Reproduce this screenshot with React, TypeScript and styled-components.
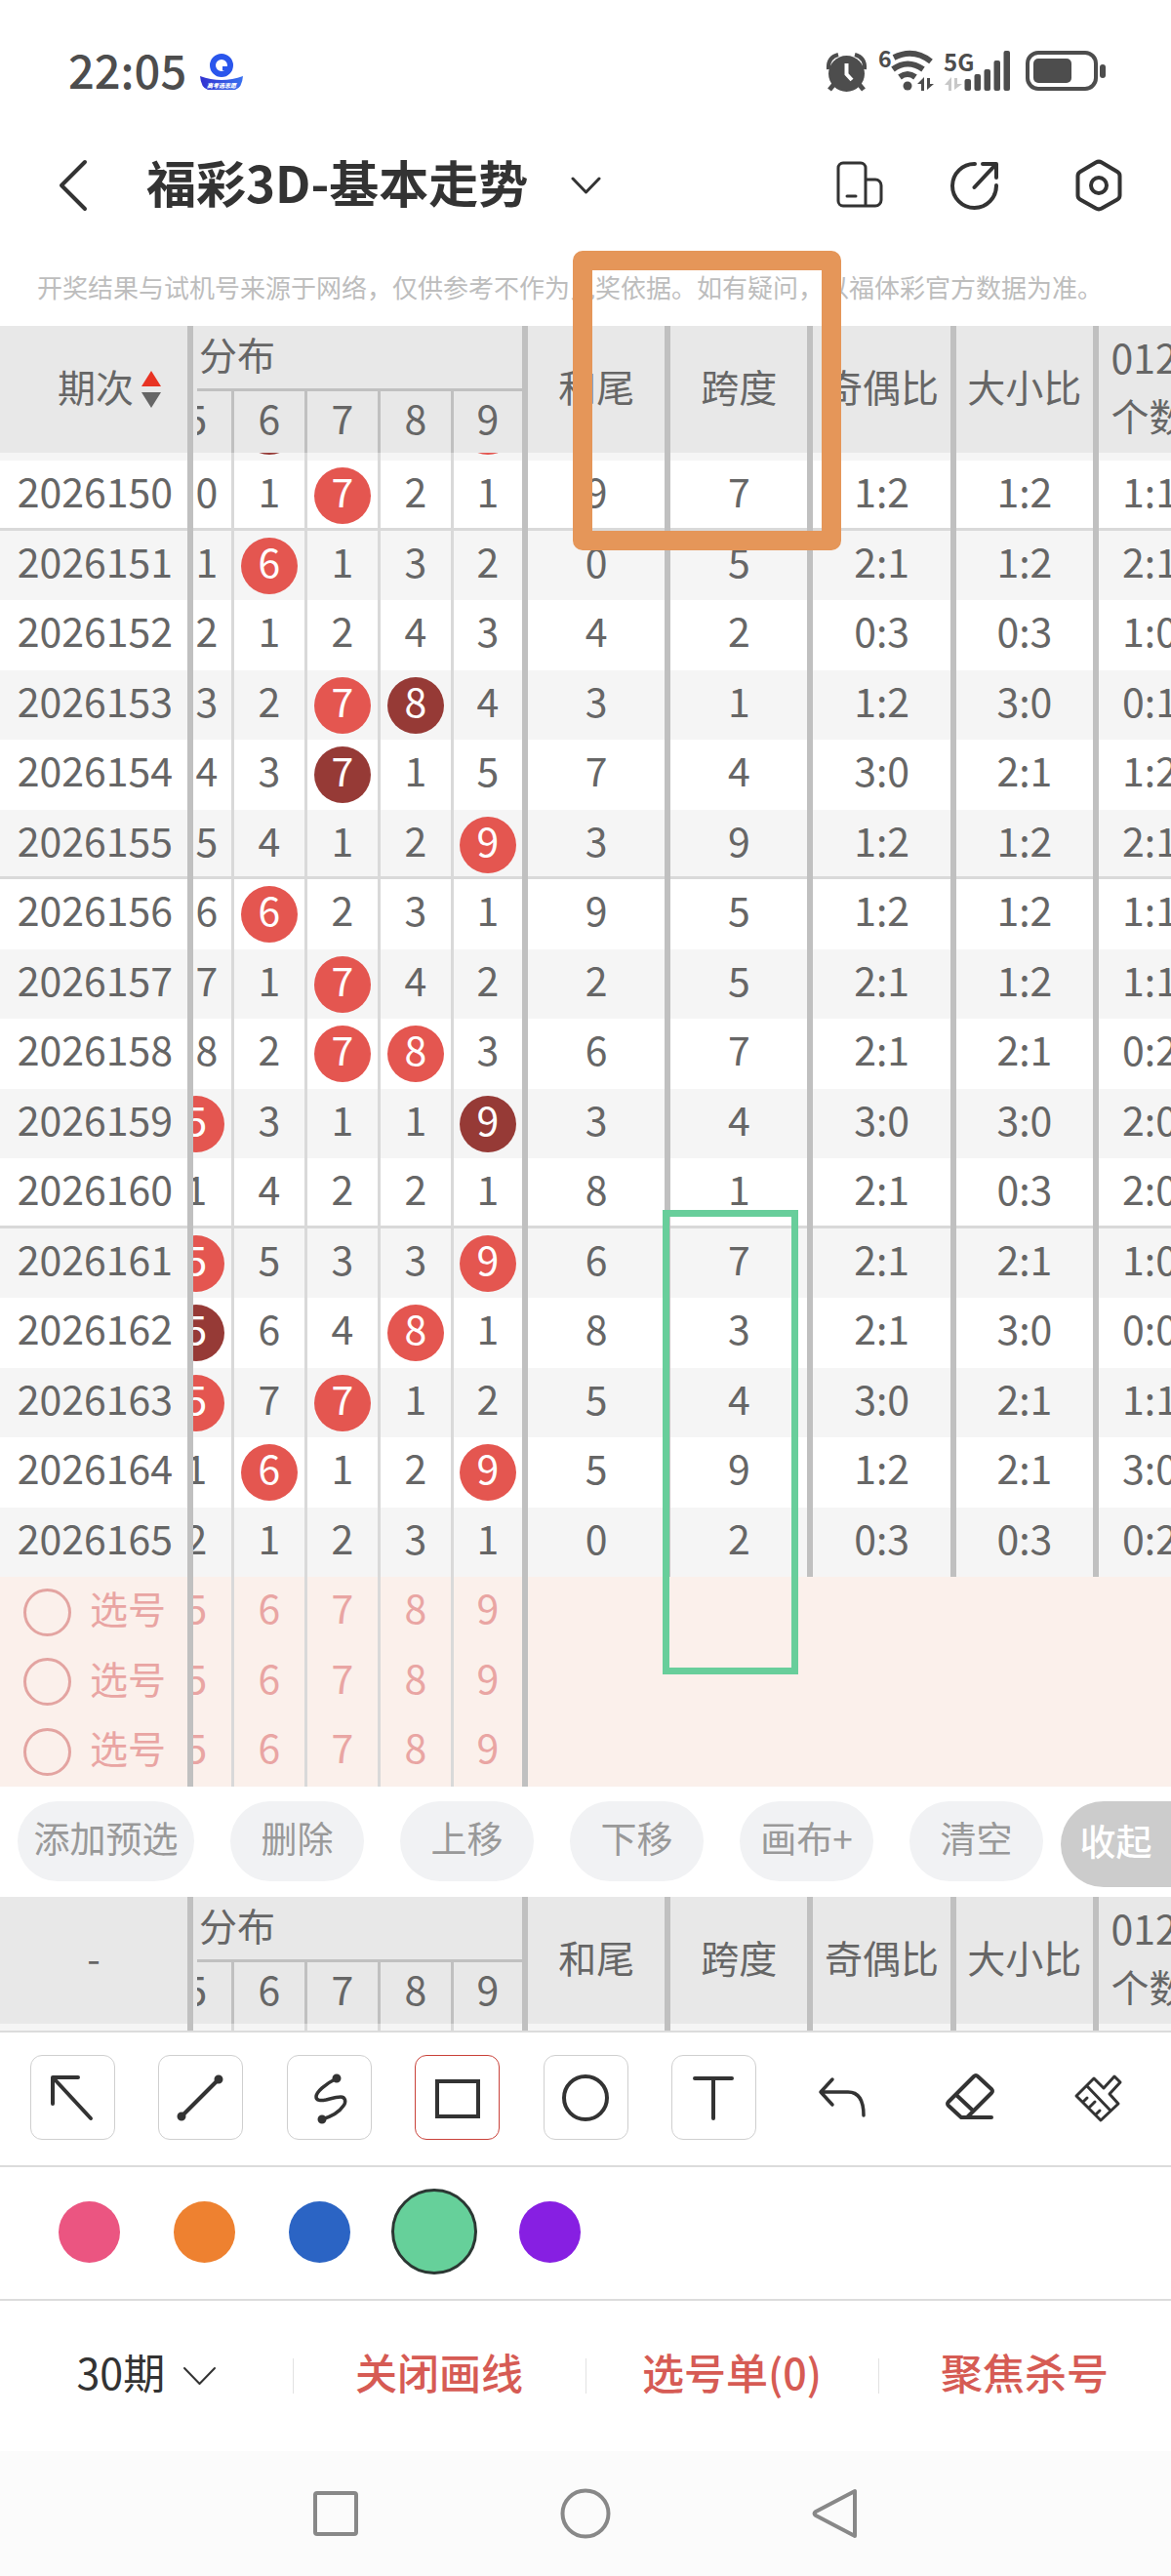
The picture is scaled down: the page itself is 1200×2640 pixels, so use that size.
import React from "react";
import styled, { createGlobalStyle, css } from "styled-components";

const GlobalStyle = createGlobalStyle`
  *, *::before, *::after { box-sizing: border-box; }
  body {
    margin: 0;
    background: #fff;
    color: #666;
    font-family: "Noto Sans CJK SC", "Noto Sans", sans-serif;
    overflow-x: hidden;
  }
  button, input, select { font: inherit; color: inherit; margin: 0; }
  button { padding: 0; border: 0; background: none; cursor: pointer; }
  h1, p { margin: 0; }
`;

/* ---------- data ---------- */

type Cell = string;
interface Draw {
  issue: string;
  dist: Cell[];
  stats: string[];
}

/* "*" marks a drawn number, "#" a number drawn twice */
const draws: Draw[] = [
  { issue: "2026150", dist: ["0", "1", "*7", "2", "1"], stats: ["9", "7", "1:2", "1:2", "1:1"] },
  { issue: "2026151", dist: ["1", "*6", "1", "3", "2"], stats: ["0", "5", "2:1", "1:2", "2:1"] },
  { issue: "2026152", dist: ["2", "1", "2", "4", "3"], stats: ["4", "2", "0:3", "0:3", "1:0"] },
  { issue: "2026153", dist: ["3", "2", "*7", "#8", "4"], stats: ["3", "1", "1:2", "3:0", "0:1"] },
  { issue: "2026154", dist: ["4", "3", "#7", "1", "5"], stats: ["7", "4", "3:0", "2:1", "1:2"] },
  { issue: "2026155", dist: ["5", "4", "1", "2", "*9"], stats: ["3", "9", "1:2", "1:2", "2:1"] },
  { issue: "2026156", dist: ["6", "*6", "2", "3", "1"], stats: ["9", "5", "1:2", "1:2", "1:1"] },
  { issue: "2026157", dist: ["7", "1", "*7", "4", "2"], stats: ["2", "5", "2:1", "1:2", "1:1"] },
  { issue: "2026158", dist: ["8", "2", "*7", "*8", "3"], stats: ["6", "7", "2:1", "2:1", "0:2"] },
  { issue: "2026159", dist: ["*5", "3", "1", "1", "#9"], stats: ["3", "4", "3:0", "3:0", "2:0"] },
  { issue: "2026160", dist: ["1", "4", "2", "2", "1"], stats: ["8", "1", "2:1", "0:3", "2:0"] },
  { issue: "2026161", dist: ["*5", "5", "3", "3", "*9"], stats: ["6", "7", "2:1", "2:1", "1:0"] },
  { issue: "2026162", dist: ["#5", "6", "4", "*8", "1"], stats: ["8", "3", "2:1", "3:0", "0:0"] },
  { issue: "2026163", dist: ["*5", "7", "*7", "1", "2"], stats: ["5", "4", "3:0", "2:1", "1:1"] },
  { issue: "2026164", dist: ["1", "*6", "1", "2", "*9"], stats: ["5", "9", "1:2", "2:1", "3:0"] },
  { issue: "2026165", dist: ["2", "1", "2", "3", "1"], stats: ["0", "2", "0:3", "0:3", "0:2"] },
];

const digits = ["5", "6", "7", "8", "9"];
const editActions = ["添加预选", "删除", "上移", "下移", "画布+", "清空"];
const swatches = [
  { name: "粉色", color: "#eb5581" },
  { name: "橙色", color: "#ee8130" },
  { name: "蓝色", color: "#2b64c4" },
  { name: "绿色", color: "#66d09a" },
  { name: "紫色", color: "#871fe2" },
];

/* ---------- layout ---------- */

const Screen = styled.div`
  display: flex;
  flex-direction: column;
  overflow: hidden;
  background: #fff;
`;

const StatusBar = styled.div`
  display: flex;
  align-items: center;
  justify-content: space-between;
  height: 148px;
  padding: 0 66px 0 70px;
  color: #4d4d4d;
`;

const StatusGroup = styled.div<{ $gap: number }>`
  display: flex;
  align-items: center;
  gap: ${(p) => p.$gap}px;
`;

const Clock = styled.time`
  font-size: 47px;
  font-weight: 500;
  line-height: 56px;
  padding-bottom: 6px;
`;

const AppBar = styled.header`
  display: flex;
  align-items: center;
  height: 84px;
  padding: 0 50px 0 57px;
  color: #333;
`;

const IconButton = styled.button`
  display: flex;
  align-items: center;
  justify-content: center;
`;

const TitleButton = styled.button`
  display: flex;
  align-items: center;
  gap: 44px;
  margin-left: 57px;
`;

const Title = styled.h1`
  font-size: 51px;
  font-weight: 700;
  line-height: 60px;
  padding-bottom: 8px;
`;

const AppActions = styled.div`
  display: flex;
  gap: 68px;
  margin-left: auto;
`;

const Notice = styled.p`
  padding: 42px 38px 20px;
  font-size: 26px;
  line-height: 40px;
  color: #bdbdbd;
  white-space: nowrap;
`;

const ChartArea = styled.main`
  position: relative;
`;

const Annotation = styled.div<{ $x: number; $y: number; $w: number; $h: number }>`
  position: absolute;
  left: ${(p) => p.$x}px;
  top: ${(p) => p.$y}px;
  width: ${(p) => p.$w}px;
  height: ${(p) => p.$h}px;
  pointer-events: none;
`;

const OrangeBox = styled(Annotation)`
  border: 20px solid #e59659;
  border-radius: 10px;
`;

const GreenBox = styled(Annotation)`
  border: 7px solid #68ce9b;
`;

/* ---------- trend table ---------- */

const TrendTable = styled.table`
  width: calc(100% + 31px);
  table-layout: fixed;
  border-collapse: separate;
  border-spacing: 0;
  font-size: 41px;
  line-height: 58px;
  text-align: center;
`;

const Col = styled.col<{ $w?: number }>`
  ${(p) => p.$w && css`width: ${p.$w}px;`}
`;

const thick = "6px solid #c0c0c0";

const HeadCell = styled.th<{ $last?: boolean }>`
  padding: 0 0 8px;
  background: #e8e8e8;
  font-size: 39px;
  font-weight: 400;
  white-space: nowrap;
  border-right: ${(p) => (p.$last ? "0" : thick)};
`;

const GroupHead = styled.th`
  padding: 0 0 0 4px;
  background: #e8e8e8;
  border-right: ${thick};
  font-size: 39px;
  font-weight: 400;
  text-align: left;
`;

const GroupLabel = styled.div`
  height: 67px;
  padding-left: 2px;
  line-height: 56px;
  border-bottom: 3px solid #c0c0c0;
`;

const DigitHead = styled.th<{ $last?: boolean }>`
  height: 63px;
  padding: 0;
  background: #e8e8e8;
  font-weight: 400;
  border-right: ${(p) => (p.$last ? thick : "3px solid #c0c0c0")};
`;

/* the leftmost digit column is scrolled partly under the issue column */
const Slot = styled.div<{ $clip: boolean; $inset?: boolean }>`
  ${(p) => p.$clip && css`overflow: hidden;`}
  margin-left: ${(p) => (p.$inset ? 4 : 0)}px;
`;

const SortLabel = styled.button`
  display: inline-flex;
  align-items: center;
  gap: 8px;
  padding-left: 32px;
`;

const SortArrows = styled.svg`
  margin-top: 8px;
`;

const TwoLine = styled.div`
  width: 80px;
  margin: 0 auto;
  text-align: left;
  font-size: 39px;
  line-height: 59px;
`;

const Wide = styled.span`
  font-size: 41px;
`;

const Row = styled.tr<{ $tone: "plain" | "grey" | "pick"; $ruled?: boolean; $h: number }>`
  height: ${(p) => p.$h}px;
  background: ${(p) => ({ plain: "#fff", grey: "#f5f5f5", pick: "#fbf0eb" })[p.$tone]};
  color: ${(p) => (p.$tone === "pick" ? "#e9a5a3" : "#666")};
  ${(p) =>
    p.$ruled &&
    css`
      td, th { box-shadow: inset 0 -3px #d9d9d9; }
    `}
`;

const IssueCell = styled.th`
  padding: 0 0 0 3px;
  font-weight: 400;
  border-right: ${thick};
`;

const DataCell = styled.td<{ $edge: "thin" | "thick" | "none" }>`
  padding: 0;
  border-right: ${(p) => ({ thin: "3px solid #d9d9d9", thick, none: "0" })[p.$edge]};
`;

const Value = styled.div`
  height: 58px;
  padding-bottom: 12px;
  line-height: 46px;
`;

const Ball = styled(Value)<{ $kind: "none" | "single" | "double"; $shift?: number }>`
  width: 58px;
  margin: 0 auto;
  border-radius: 50%;
  ${(p) => p.$shift !== undefined && css`margin-left: ${p.$shift}px;`}
  ${(p) => p.$kind !== "none" && css`color: #fff;`}
  background: ${(p) => ({ none: "transparent", single: "#e45650", double: "#963a36" })[p.$kind]};
`;

const Peek = styled.div<{ $h: number }>`
  height: ${(p) => p.$h}px;
  overflow: hidden;
`;

const PeekBall = styled(Ball)`
  margin-top: -56px;
`;

const PickLabel = styled.label`
  display: flex;
  align-items: center;
  gap: 19px;
  padding-left: 21px;
  font-size: 39px;
`;

const PickText = styled.span`
  line-height: 48px;
  padding-bottom: 10px;
`;

const PickRadio = styled.input`
  appearance: none;
  width: 49px;
  height: 49px;
  border: 3px solid #e3a4a1;
  border-radius: 50%;
`;

/* ---------- edit bar ---------- */

const EditBar = styled.div`
  display: flex;
  gap: 37px;
  padding: 15px 0 10px 18px;
  font-size: 37px;
  line-height: 48px;
`;

const Pill = styled.button<{ $w: number }>`
  flex: none;
  width: ${(p) => p.$w}px;
  height: 82px;
  padding-bottom: 8px;
  border-radius: 41px;
  background: #f1f2f4;
  color: #999;
  white-space: nowrap;
`;

const CollapseButton = styled.button`
  flex: none;
  width: 113px;
  height: 88px;
  margin-left: -19px;
  padding: 0 0 9px;
  border-radius: 44px 0 0 44px;
  background: #ccc;
  color: #fff;
  font-weight: 500;
`;

/* ---------- tools ---------- */

const ToolBar = styled.div`
  display: flex;
  justify-content: space-between;
  padding: 23px 31px 26px;
  border-top: 2px solid #dcdcdc;
`;

const Tool = styled.button<{ $framed: boolean; $active: boolean }>`
  display: flex;
  align-items: center;
  justify-content: center;
  width: 87px;
  height: 87px;
  border-radius: 12px;
  border: 1px solid ${(p) => (p.$active ? "#c9423a" : p.$framed ? "#cfcfcf" : "transparent")};
`;

const ColorBar = styled.div`
  display: flex;
  gap: 30px;
  padding: 22px 47px 25px;
  border-top: 2px solid #dcdcdc;
  border-bottom: 2px solid #dcdcdc;
`;

const SwatchButton = styled.button`
  display: flex;
  align-items: center;
  justify-content: center;
  width: 88px;
  height: 88px;
`;

const Dot = styled.span<{ $color: string; $active: boolean }>`
  width: ${(p) => (p.$active ? 88 : 63)}px;
  height: ${(p) => (p.$active ? 88 : 63)}px;
  border-radius: 50%;
  background: ${(p) => p.$color};
  border: ${(p) => (p.$active ? "3px solid #2b3733" : "0")};
`;

const BottomBar = styled.div`
  display: grid;
  grid-template-columns: repeat(4, 1fr);
  height: 154px;
  font-size: 43px;
  line-height: 52px;
`;

const BottomItem = styled.div`
  display: flex;
  align-items: center;
  justify-content: center;
  gap: 16px;
  color: #333;
  &:not(:first-child) {
    background: linear-gradient(#e2e2e2, #e2e2e2) no-repeat left center / 1px 36px;
  }
`;

const PeriodSelect = styled.select`
  appearance: none;
  width: 92px;
  padding: 0 0 10px;
  border: 0;
  background: none;
  line-height: 52px;
`;

const BottomButton = styled.button`
  padding-bottom: 10px;
  color: #d65b54;
  font-weight: 500;
`;

const SystemNav = styled.nav`
  display: flex;
  justify-content: center;
  gap: 204px;
  padding: 38px 0;
  background: #fbfbfb;
`;

/* ---------- icons ---------- */

const stroke = {
  fill: "none",
  stroke: "#333",
  strokeWidth: 4,
  strokeLinecap: "round" as const,
  strokeLinejoin: "round" as const,
};

const AppLogo = () => (
  <svg width="46" height="40" viewBox="0 0 46 40" role="img" aria-label="高考志愿">
    <defs>
      <linearGradient id="ribbon" x1="0" x2="1">
        <stop offset="0" stopColor="#3232d0" />
        <stop offset="1" stopColor="#3a72f0" />
      </linearGradient>
    </defs>
    <circle cx="23" cy="13" r="9" fill="none" stroke="#2a56ec" strokeWidth="6" />
    <path d="M24 18 L24 14 L30 14 L28 19 Z" fill="#2a56ec" />
    <path d="M1 24 Q23 32 45 24 Q44 36 37 38 H9 Q2 36 1 24 Z" fill="url(#ribbon)" />
    <text x="23" y="36" fontSize="6" fontWeight="900" fontStyle="italic" fill="#fff" textAnchor="middle">
      高考选志愿
    </text>
  </svg>
);

const StatusIcons = () => (
  <svg width="288" height="48" viewBox="846 50 288 48" fill="#4d4d4d" aria-label="闹钟 无线 5G 电池">
    {/* alarm */}
    <circle cx="867.500" cy="75.500" r="18.500" />
    <path d="M849 71 Q848 59 859 56" fill="none" stroke="#4d4d4d" strokeWidth="4" />
    <path d="M886 71 Q887 59 876 56" fill="none" stroke="#4d4d4d" strokeWidth="4" />
    <path d="M855 86 L850 92 M880 86 L885 92" stroke="#4d4d4d" strokeWidth="5" />
    <path d="M867.500 65 V76 L873 82" fill="none" stroke="#fff" strokeWidth="4" />
    {/* wi-fi */}
    <text x="900" y="69" fontSize="23" fontWeight="700">6</text>
    <g fill="none" stroke="#4d4d4d" strokeWidth="6">
      <path d="M916 59 Q936 49 954 63" />
      <path d="M915 71 Q930 60 946 71" />
      <path d="M922 79 Q930 73 938 79" />
    </g>
    <circle cx="930" cy="88" r="4.500" />
    <path d="M940 86 L947 79 V93 H944 V86 Z M950 80 V92 L957 86 H953 V80 Z" />
    {/* mobile signal */}
    <text x="967" y="73" fontSize="24" fontWeight="700">5G</text>
    <path d="M968 87 L975 79 V93 H972 V87 Z M978 80 V92 L986 86 H981 V80 Z" fill="#c8c8c8" />
    <rect x="988.500" y="81" width="6.500" height="12" rx="2" />
    <rect x="998.500" y="76" width="6.500" height="17" rx="2" />
    <rect x="1008.500" y="71" width="6.500" height="22" rx="2" />
    <rect x="1018.500" y="62" width="6.500" height="31" rx="2" />
    <rect x="1028.500" y="52" width="6.500" height="41" rx="2" />
    {/* battery */}
    <rect x="1053" y="54" width="70" height="37" rx="11" fill="none" stroke="#4d4d4d" strokeWidth="4" />
    <rect x="1059" y="60" width="39" height="25" rx="5" />
    <rect x="1127" y="66" width="6" height="14" rx="3" />
  </svg>
);

const BackIcon = () => (
  <svg width="36" height="54" viewBox="0 0 36 54" {...stroke}>
    <path d="M30 3 L6 27 L30 51" />
  </svg>
);

const ChevronDown = ({ w, h, sw }: { w: number; h: number; sw: number }) => (
  <svg width={w} height={h} viewBox={`0 0 ${w} ${h}`} {...stroke} strokeWidth={sw}>
    <path d={`M2 2 L${w / 2} ${h - 2} L${w - 2} 2`} />
  </svg>
);

const DevicesIcon = () => (
  <svg width="50" height="52" viewBox="0 0 50 52" {...stroke} strokeWidth={3}>
    <path d="M31 47 V8 a5 5 0 0 0 -5 -5 H8 a5 5 0 0 0 -5 5 V42 a5 5 0 0 0 5 5 H41 a6 6 0 0 0 6 -6 V26 a6 6 0 0 0 -6 -6 H31" />
    <path d="M12 37 H21" />
  </svg>
);

const ShareIcon = () => (
  <svg width="60" height="52" viewBox="0 0 60 52" {...stroke}>
    <path d="M25 4 A22.500 22.500 0 1 0 47 26" />
    <path d="M33 4 H47 V18 M46 5 L24.500 28" />
  </svg>
);

const HexIcon = () => (
  <svg width="48" height="54" viewBox="0 0 48 54" {...stroke}>
    <path d="M21 3.500 a6 6 0 0 1 6 0 L43 13 a5 5 0 0 1 2.500 4.500 V37 a5 5 0 0 1 -2.500 4.500 L27 50.500 a6 6 0 0 1 -6 0 L5 41.500 A5 5 0 0 1 2.500 37 V17.500 A5 5 0 0 1 5 13 Z" />
    <circle cx="24" cy="27" r="8" />
  </svg>
);

const tools: { name: string; framed: boolean; art: React.ReactNode }[] = [
  {
    name: "箭头",
    framed: true,
    art: <path d="M33 8 H7 V35 M8 9 L46 50" />,
  },
  {
    name: "直线",
    framed: true,
    art: (
      <>
        <path d="M8 48 L46 10" />
        <circle cx="8" cy="48" r="2.500" fill="#333" />
        <circle cx="46" cy="10" r="2.500" fill="#333" />
      </>
    ),
  },
  {
    name: "曲线",
    framed: true,
    art: (
      <>
        <path
          d="M36 9 C24 15 15 23 15 28 C15 32 20 32 25 31 C31 29.500 36 28 40 28 C45 28 46 33 43 37 C39 43 31 48 21 51"
          strokeWidth={3.5}
        />
        <circle cx="36" cy="9" r="2.500" fill="#333" />
        <circle cx="21" cy="51" r="2.500" fill="#333" />
      </>
    ),
  },
  {
    name: "矩形",
    framed: true,
    art: <rect x="7" y="12" width="42" height="36" strokeLinejoin="miter" />,
  },
  { name: "圆形", framed: true, art: <circle cx="28" cy="29" r="22" /> },
  { name: "文字", framed: true, art: <path d="M9 9 H47 M28 9 V50" /> },
  {
    name: "撤销",
    framed: false,
    art: <path d="M18 10 L6 23 L18 36 M6 23 H34 Q50 23 50 47" strokeWidth={3.5} />,
  },
  {
    name: "橡皮",
    framed: false,
    art: (
      <path d="M19 49 L6 37 Q4 35 6 33 L32 7 Q34 5 36 7 L50 20 Q52 22 50 24 L25 49 M14 26 L31 42 M19 49 H50" />
    ),
  },
  {
    name: "清屏",
    framed: false,
    art: (
      <path
        d="M5 27 L23 9 L33 19 L44 7 L50 13 L39 25 L48 35 L30 52 Z M16 17 L40 42 M12 33 L16 29 M18 39 L24 33 M25 46 L29 42"
        strokeWidth={3}
      />
    ),
  },
];

/* ---------- parts ---------- */

const kindOf = (c: Cell) => (c[0] === "*" ? "single" : c[0] === "#" ? "double" : "none");
const textOf = (c: Cell) => c.replace(/[*#]/, "");

const Columns = () => (
  <colgroup>
    <Col $w={198} />
    <Col $w={42} />
    <Col $w={75} />
    <Col $w={75} />
    <Col $w={75} />
    <Col $w={76} />
    <Col />
    <Col />
    <Col />
    <Col />
    <Col $w={105} />
  </colgroup>
);

const TrendHead = ({ corner }: { corner: React.ReactNode }) => (
  <thead>
    <tr>
      <HeadCell rowSpan={2}>{corner}</HeadCell>
      <GroupHead colSpan={5}>
        <GroupLabel>分布</GroupLabel>
      </GroupHead>
      {["和尾", "跨度", "奇偶比", "大小比"].map((name) => (
        <HeadCell key={name} rowSpan={2}>
          {name}
        </HeadCell>
      ))}
      <HeadCell rowSpan={2} $last>
        <TwoLine>
          <Wide>012</Wide>
          <br />
          个数
        </TwoLine>
      </HeadCell>
    </tr>
    <tr>
      {digits.map((d, i) => (
        <DigitHead key={d} $last={i === 4}>
          <Slot $clip={i === 0} $inset={i === 0}>
            <Ball $kind="none" $shift={i === 0 ? -30 : undefined}>
              {d}
            </Ball>
          </Slot>
        </DigitHead>
      ))}
    </tr>
  </thead>
);

/* sliver of the neighbouring row that shows at the edge of the scroll area */
const EdgeRow = ({ height, balls }: { height: number; balls: Cell[] }) => (
  <Row $tone="grey" $h={height} aria-hidden>
    <IssueCell as="td" />
    {balls.map((b, i) => (
      <DataCell key={i} $edge={i === 4 ? "thick" : "thin"}>
        <Peek $h={height}>{b && <PeekBall $kind={kindOf(b)} />}</Peek>
      </DataCell>
    ))}
    {["a", "b", "c", "d", "e"].map((k) => (
      <DataCell key={k} $edge={k === "e" ? "none" : "thick"} />
    ))}
  </Row>
);

const DrawRow = ({ draw, index }: { draw: Draw; index: number }) => (
  <Row $tone={index % 2 ? "grey" : "plain"} $ruled={index % 5 === 0 && index < 15} $h={index % 2 ? 71 : 72}>
    <IssueCell scope="row">
      <Value>{draw.issue}</Value>
    </IssueCell>
    {draw.dist.map((c, i) => (
      <DataCell key={i} $edge={i === 4 ? "thick" : "thin"}>
        <Slot $clip={i === 0}>
          <Ball $kind={kindOf(c)} $shift={i === 0 ? (index < 9 ? -15 : -26) : undefined}>
            {textOf(c)}
          </Ball>
        </Slot>
      </DataCell>
    ))}
    {draw.stats.map((s, i) => (
      <DataCell key={i} $edge={i === 4 ? "none" : "thick"}>
        <Value>{s}</Value>
      </DataCell>
    ))}
  </Row>
);

const PickRow = ({ index }: { index: number }) => (
  <Row $tone="pick" $h={index % 2 ? 71 : 72}>
    <IssueCell scope="row">
      <PickLabel>
        <PickRadio type="radio" name="pick" />
        <PickText>选号</PickText>
      </PickLabel>
    </IssueCell>
    {digits.map((d, i) => (
      <DataCell key={d} $edge={i === 4 ? "thick" : "thin"}>
        <Slot $clip={i === 0}>
          <Ball $kind="none" $shift={i === 0 ? -26 : undefined}>
            {d}
          </Ball>
        </Slot>
      </DataCell>
    ))}
    <DataCell $edge="none" colSpan={5} />
  </Row>
);

export default function App() {
  return (
    <>
      <GlobalStyle />
      <Screen>
        <StatusBar>
          <StatusGroup $gap={13}>
            <Clock>22:05</Clock>
            <AppLogo />
          </StatusGroup>
          <StatusIcons />
        </StatusBar>

        <AppBar>
          <IconButton aria-label="返回">
            <BackIcon />
          </IconButton>
          <TitleButton>
            <Title>福彩3D-基本走势</Title>
            <ChevronDown w={31} h={18} sw={3} />
          </TitleButton>
          <AppActions>
            <IconButton aria-label="多屏">
              <DevicesIcon />
            </IconButton>
            <IconButton aria-label="分享">
              <ShareIcon />
            </IconButton>
            <IconButton aria-label="设置">
              <HexIcon />
            </IconButton>
          </AppActions>
        </AppBar>

        <Notice>开奖结果与试机号来源于网络，仅供参考不作为兑奖依据。如有疑问，以福体彩官方数据为准。</Notice>

        <ChartArea>
          <TrendTable>
            <Columns />
            <TrendHead
              corner={
                <SortLabel>
                  期次
                  <SortArrows width="20" height="40" viewBox="0 0 20 40">
                    <path d="M10 1 L20 17 H0 Z" fill="#e83323" />
                    <path d="M0 23 H20 L10 39 Z" fill="#666" />
                  </SortArrows>
                </SortLabel>
              }
            />
            <tbody>
              <EdgeRow height={8} balls={["", "#6", "", "", "*9"]} />
              {draws.map((d, i) => (
                <DrawRow key={d.issue} draw={d} index={i} />
              ))}
              {[0, 1, 2].map((i) => (
                <PickRow key={i} index={i} />
              ))}
            </tbody>
          </TrendTable>
          <OrangeBox $x={587} $y={-77} $w={275} $h={307} />
          <GreenBox $x={679} $y={906} $w={139} $h={476} />
        </ChartArea>

        <EditBar>
          {editActions.map((name, i) => (
            <Pill key={name} $w={i === 0 ? 181 : 137}>
              {name}
            </Pill>
          ))}
          <CollapseButton>收起</CollapseButton>
        </EditBar>

        <TrendTable>
          <Columns />
          <TrendHead corner="-" />
          <tbody>
            <EdgeRow height={7} balls={["", "", "", "", ""]} />
          </tbody>
        </TrendTable>

        <ToolBar>
          {tools.map((t) => (
            <Tool key={t.name} aria-label={t.name} $framed={t.framed} $active={t.name === "矩形"}>
              <svg width="56" height="58" viewBox="0 0 56 58" {...stroke}>
                {t.art}
              </svg>
            </Tool>
          ))}
        </ToolBar>

        <ColorBar>
          {swatches.map((s) => (
            <SwatchButton key={s.name} aria-label={s.name}>
              <Dot $color={s.color} $active={s.name === "绿色"} />
            </SwatchButton>
          ))}
        </ColorBar>

        <BottomBar>
          <BottomItem>
            <PeriodSelect aria-label="期数" defaultValue="30">
              <option value="30">30期</option>
            </PeriodSelect>
            <ChevronDown w={35} h={20} sw={2} />
          </BottomItem>
          <BottomItem>
            <BottomButton>关闭画线</BottomButton>
          </BottomItem>
          <BottomItem>
            <BottomButton>选号单(0)</BottomButton>
          </BottomItem>
          <BottomItem>
            <BottomButton>聚焦杀号</BottomButton>
          </BottomItem>
        </BottomBar>

        <SystemNav>
          <IconButton aria-label="最近任务">
            <svg width="52" height="52" viewBox="0 0 52 52" {...stroke} stroke="#888">
              <rect x="5" y="5" width="42" height="42" rx="2" />
            </svg>
          </IconButton>
          <IconButton aria-label="主页">
            <svg width="52" height="52" viewBox="0 0 52 52" {...stroke} stroke="#888">
              <circle cx="26" cy="26" r="23.500" />
            </svg>
          </IconButton>
          <IconButton aria-label="后退">
            <svg width="52" height="52" viewBox="0 0 52 52" {...stroke} stroke="#888">
              <path d="M46 3 V49 L6 28 Q3 26 6 24 Z" />
            </svg>
          </IconButton>
        </SystemNav>
      </Screen>
    </>
  );
}
